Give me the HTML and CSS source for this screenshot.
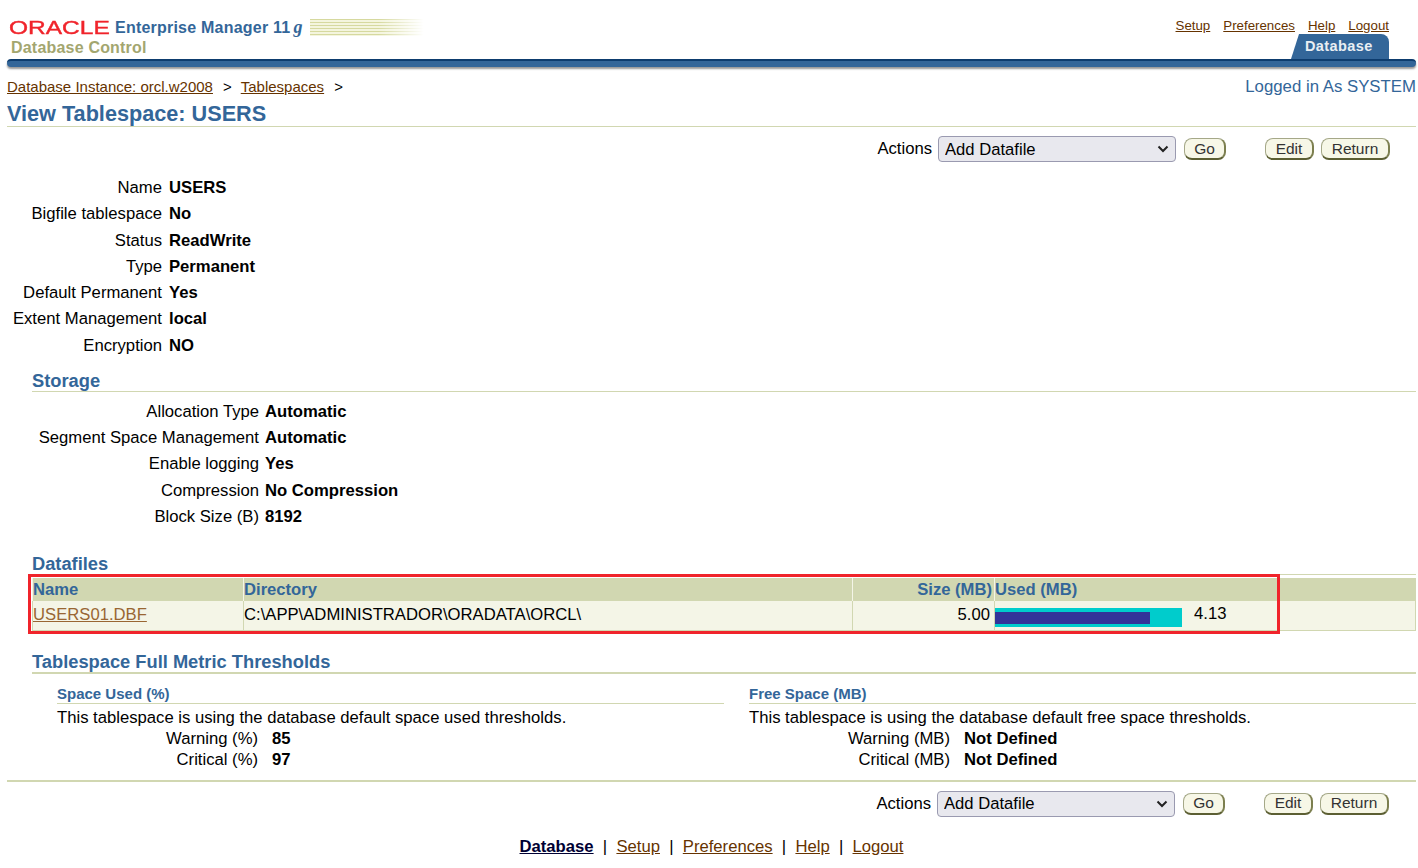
FILE: index.html
```html
<!DOCTYPE html>
<html lang="en">
<head>
    <meta charset="UTF-8">
    <title>View Tablespace: USERS</title>
    <link rel="stylesheet" href="styles.css">
</head>
<body>
    <header class="top">
        <div class="brand">
            <div class="brand-line">
                <span class="oracle">ORACLE</span>
                <span class="em">Enterprise Manager 11<i>g</i></span>
                <span class="stripes"></span>
            </div>
            <div class="dbcontrol">Database Control</div>
        </div>
        <div class="top-right">
            <nav class="global-links">
                <a href="#">Setup</a>
                <a href="#">Preferences</a>
                <a href="#">Help</a>
                <a href="#">Logout</a>
            </nav>
            <div class="tab">Database</div>
        </div>
    </header>
    <div class="bar"></div>

    <div class="crumb-row">
        <div class="crumbs">
            <a href="#">Database Instance: orcl.w2008</a><span class="sep">&gt;</span><a href="#">Tablespaces</a><span class="sep">&gt;</span>
        </div>
        <div class="logged">Logged in As SYSTEM</div>
    </div>
    <h1>View Tablespace: USERS</h1>

    <div class="actions">
        <label class="actions-label">Actions</label>
        <select class="actions-select"><option>Add Datafile</option></select>
        <button class="btn btn-go" type="button">Go</button>
        <button class="btn btn-edit" type="button">Edit</button>
        <button class="btn btn-return" type="button">Return</button>
    </div>

    <dl class="props props-main">
        <dt>Name</dt><dd>USERS</dd>
        <dt>Bigfile tablespace</dt><dd>No</dd>
        <dt>Status</dt><dd>ReadWrite</dd>
        <dt>Type</dt><dd>Permanent</dd>
        <dt>Default Permanent</dt><dd>Yes</dd>
        <dt>Extent Management</dt><dd>local</dd>
        <dt>Encryption</dt><dd>NO</dd>
    </dl>

    <section class="section storage">
        <h2>Storage</h2>
        <dl class="props props-storage">
            <dt>Allocation Type</dt><dd>Automatic</dd>
            <dt>Segment Space Management</dt><dd>Automatic</dd>
            <dt>Enable logging</dt><dd>Yes</dd>
            <dt>Compression</dt><dd>No Compression</dd>
            <dt>Block Size (B)</dt><dd>8192</dd>
        </dl>
    </section>

    <section class="section datafiles">
        <h2>Datafiles</h2>
        <div class="table-wrap">
            <table class="files">
                <thead>
                    <tr>
                        <th class="col-name">Name</th>
                        <th class="col-dir">Directory</th>
                        <th class="col-size num">Size (MB)</th>
                        <th>Used (MB)</th>
                    </tr>
                </thead>
                <tbody>
                    <tr>
                        <td><a class="file-link" href="#">USERS01.DBF</a></td>
                        <td>C:\APP\ADMINISTRADOR\ORADATA\ORCL\</td>
                        <td class="num">5.00</td>
                        <td>
                            <div class="used">
                                <div class="meter"><div class="meter-fill"></div></div>
                                <span>4.13</span>
                            </div>
                        </td>
                    </tr>
                </tbody>
            </table>
            <div class="highlight"></div>
        </div>
    </section>

    <section class="section thresholds">
        <h2 class="thick">Tablespace Full Metric Thresholds</h2>
        <div class="metric-cols">
            <div class="metric">
                <h3>Space Used (%)</h3>
                <p>This tablespace is using the database default space used thresholds.</p>
                <div class="metric-row"><span class="metric-label">Warning (%)</span><b>85</b></div>
                <div class="metric-row"><span class="metric-label">Critical (%)</span><b>97</b></div>
            </div>
            <div class="metric">
                <h3>Free Space (MB)</h3>
                <p>This tablespace is using the database default free space thresholds.</p>
                <div class="metric-row"><span class="metric-label">Warning (MB)</span><b>Not Defined</b></div>
                <div class="metric-row"><span class="metric-label">Critical (MB)</span><b>Not Defined</b></div>
            </div>
        </div>
    </section>

    <div class="rule"></div>

    <div class="actions actions-bottom">
        <label class="actions-label">Actions</label>
        <select class="actions-select"><option>Add Datafile</option></select>
        <button class="btn btn-go" type="button">Go</button>
        <button class="btn btn-edit" type="button">Edit</button>
        <button class="btn btn-return" type="button">Return</button>
    </div>

    <footer class="foot">
        <a class="current" href="#">Database</a><span>|</span><a href="#">Setup</a><span>|</span><a href="#">Preferences</a><span>|</span><a href="#">Help</a><span>|</span><a href="#">Logout</a>
    </footer>
</body>
</html>
```

FILE: styles.css
```css
body {
    font-family: "Liberation Sans", Arial, sans-serif;
    font-size: 16.66px;
    color: #000;
    background-color: #fff;
    margin: 0;
    padding: 0 2px 0 7px;
    height: 868px;
    overflow: hidden;
}

a {
    color: #663300;
}

/* header */
.top {
    display: flex;
    justify-content: space-between;
    height: 59px;
}

.brand {
    padding: 17px 0 0 2px;
}

.brand-line {
    display: flex;
    align-items: center;
    height: 21px;
}

.oracle {
    color: #f0242b;
    font-size: 19px;
    line-height: 21px;
    width: 106px;
    transform: scaleX(1.29);
    transform-origin: left center;
    -webkit-text-stroke: 0.4px #f0242b;
}

.em {
    color: #336699;
    font-size: 16px;
    font-weight: bold;
    white-space: nowrap;
    width: 195px;
    letter-spacing: 0.22px;
}

.em i {
    font-family: "Liberation Serif", serif;
    font-size: 18px;
    margin-left: 3px;
}

.stripes {
    width: 114px;
    height: 17px;
    background: repeating-linear-gradient(to bottom, #d6d99f 0, #d6d99f 1px, #f4f5de 1px, #f4f5de 3px);
    -webkit-mask-image: linear-gradient(to right, #000 60%, transparent);
    mask-image: linear-gradient(to right, #000 60%, transparent);
}

.dbcontrol {
    color: #a3a66f;
    font-size: 16px;
    font-weight: bold;
    line-height: 20px;
    margin-left: 2px;
    letter-spacing: 0.2px;
}

.top-right {
    display: flex;
    flex-direction: column;
    align-items: flex-end;
    padding: 18px 27px 0 0;
}

.global-links {
    display: flex;
    gap: 13px;
    font-size: 13.3px;
    line-height: 16px;
}

.tab {
    background-color: #336699;
    color: #e9eef3;
    font-size: 14.5px;
    font-weight: bold;
    height: 25px;
    line-height: 25px;
    width: 98px;
    padding-left: 14px;
    box-sizing: border-box;
    border-radius: 0 8px 0 0;
    clip-path: polygon(8px 0, 100% 0, 100% 100%, 0 100%);
    letter-spacing: 0.4px;
}

.bar {
    height: 8px;
    background-color: #336699;
    border-top: 2px solid #0d3c6e;
    box-sizing: border-box;
    border-radius: 4px;
    box-shadow: 0 2px 2px #999;
}

/* breadcrumb */
.crumb-row {
    display: flex;
    justify-content: space-between;
    align-items: center;
    margin-top: 9px;
    height: 21px;
}

.crumbs {
    font-size: 15px;
}

.sep {
    margin: 0 9px 0 10px;
}

.logged {
    color: #336699;
    font-size: 16.8px;
}

h1 {
    color: #336699;
    font-size: 21.66px;
    line-height: 26px;
    margin: 4px 0 0;
    border-bottom: 1px solid #d1d7b1;
    height: 25px;
}

/* action bar */
.actions {
    display: flex;
    justify-content: flex-end;
    align-items: center;
    height: 26px;
    margin-top: 9px;
    padding-right: 26px;
}

.actions-label {
    margin-right: 6px;
}

.actions-select {
    appearance: none;
    width: 238px;
    height: 26px;
    font-family: "Liberation Sans", Arial, sans-serif;
    font-size: 16.64px;
    color: #000;
    background: #e8e8ee url("data:image/svg+xml,%3Csvg xmlns='http://www.w3.org/2000/svg' width='12' height='8'%3E%3Cpath d='M1.5 1.5 6 6l4.5-4.5' fill='none' stroke='%23222' stroke-width='2'/%3E%3C/svg%3E") no-repeat right 6px center;
    border: 1px solid #9a9ab0;
    border-radius: 4px;
    padding-left: 6px;
    margin-right: 8px;
}

.btn {
    font-family: "Liberation Sans", Arial, sans-serif;
    font-size: 15.5px;
    color: #333;
    height: 22px;
    padding: 0;
    background-color: #f7f7e7;
    border: 1px solid #a5a888;
    border-bottom: 2px solid #5c5f33;
    border-right: 2px solid #7c7f4f;
    border-radius: 8px;
    box-sizing: border-box;
    line-height: 18px;
}

.btn-go {
    width: 42px;
    margin-right: 39px;
}

.btn-edit {
    width: 49px;
    margin-right: 7px;
}

.btn-return {
    width: 69px;
}

/* property lists */
.props {
    display: grid;
    grid-auto-rows: 26.25px;
    margin: 0;
    align-items: center;
}

.props dt {
    text-align: right;
}

.props dd {
    margin: 0;
    font-weight: bold;
}

.props-main {
    grid-template-columns: 155px 1fr;
    column-gap: 7px;
    margin-top: 13px;
}

.props-storage {
    grid-template-columns: 227px 1fr;
    column-gap: 6px;
}

/* sections */
.section {
    margin-left: 25px;
}

h2 {
    color: #336699;
    font-size: 18.3px;
    line-height: 21px;
    margin: 0;
    border-bottom: 1px solid #d1d7b1;
}

.storage {
    margin-top: 11.6px;
}

.storage h2 {
    margin-bottom: 6.4px;
}

.datafiles {
    margin-top: 23.4px;
}

/* datafiles table */
.table-wrap {
    position: relative;
    margin-top: 3px;
}

.files {
    width: 100%;
    border-collapse: collapse;
    table-layout: fixed;
    border: 1px solid #d1d7b1;
}

.files th {
    background-color: #d1d7b1;
    color: #336699;
    text-align: left;
    font-size: 16.64px;
    line-height: 22px;
    padding: 0;
    border-left: 1px solid #f4f5e7;
}

.files td {
    background-color: #f4f5e7;
    height: 29px;
    padding: 0 0 2px;
    box-sizing: border-box;
    border-left: 1px solid #d1d7b1;
    border-bottom: 1px solid #d1d7b1;
}

.files .num {
    text-align: right;
}

.files th.num {
    padding-right: 2px;
}

.files td.num {
    padding-right: 4px;
}

.col-name {
    width: 210px;
}

.col-dir {
    width: 608px;
}

.col-size {
    width: 139px;
}

.file-link {
    color: #996633;
}

.used {
    display: flex;
    align-items: center;
    gap: 12px;
}

.used span {
    margin-top: -1px;
}

.meter {
    width: 187px;
    height: 19px;
    margin-top: 6px;
    background-color: #00cccc;
    display: flex;
    align-items: center;
}

.meter-fill {
    width: 155px;
    height: 12px;
    background-color: #333399;
}

.highlight {
    position: absolute;
    left: -4px;
    top: -4px;
    width: 1252px;
    height: 60px;
    box-sizing: border-box;
    border: 3px solid #f0242b;
}

/* thresholds */
.thresholds {
    margin-top: 20px;
}

h2.thick {
    border-bottom-width: 2px;
}

.metric-cols {
    display: flex;
    gap: 25px;
    margin: 11px 0 0 25px;
}

.metric {
    flex: 1;
}

h3 {
    color: #336699;
    font-size: 15px;
    line-height: 18px;
    margin: 0;
    border-bottom: 1px solid #d1d7b1;
}

.metric p {
    margin: 3px 0 0;
    line-height: 21px;
}

.metric-row {
    display: flex;
    line-height: 21px;
    gap: 14px;
}

.metric-label {
    width: 201px;
    text-align: right;
}

.rule {
    height: 2px;
    background-color: #d1d7b1;
    margin-top: 10px;
}

.actions-bottom {
    margin-top: 9px;
    padding-right: 27px;
}

/* footer */
.foot {
    display: flex;
    justify-content: center;
    gap: 9.25px;
    margin-top: 18px;
    line-height: 24px;
}

.foot .current {
    color: #000033;
    font-weight: bold;
}
```
